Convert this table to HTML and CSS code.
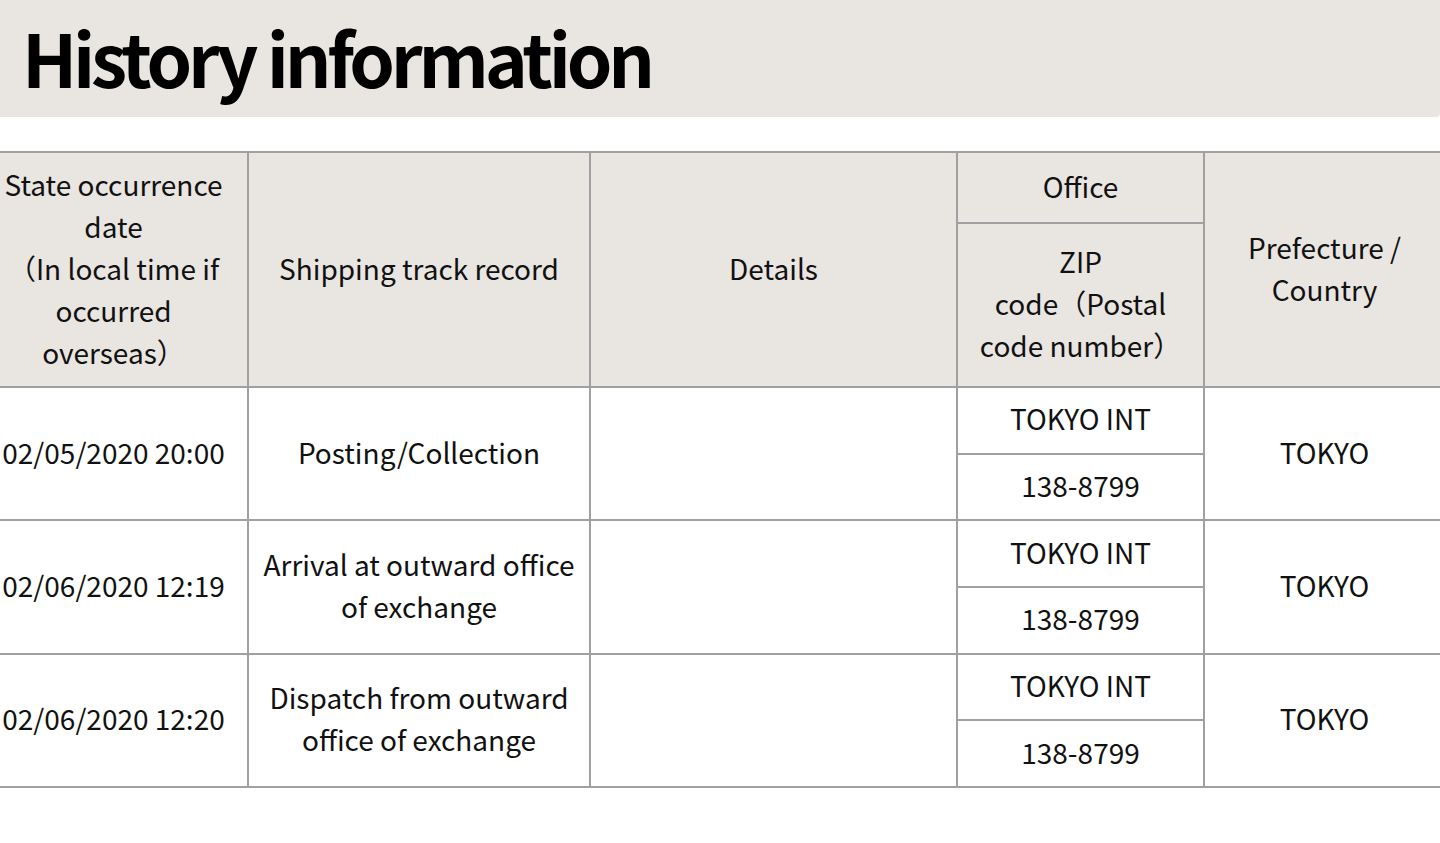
FILE: index.html
```html
<!DOCTYPE html>
<html lang="en">
<head>
<meta charset="utf-8">
<title>History information</title>
<link rel="stylesheet" href="styles.css">
</head>
<body>
<div class="page">
  <div class="title-bar">
    <h1 class="title">History information</h1>
  </div>
  <table class="history">
    <colgroup>
      <col class="c-date">
      <col class="c-track">
      <col class="c-details">
      <col class="c-office">
      <col class="c-pref">
    </colgroup>
    <thead>
      <tr class="h-top">
        <th rowspan="2">State occurrence date<br>（In local time if occurred overseas）</th>
        <th rowspan="2">Shipping track record</th>
        <th rowspan="2">Details</th>
        <th>Office</th>
        <th rowspan="2">Prefecture / Country</th>
      </tr>
      <tr class="h-bottom">
        <th>ZIP<br>code（Postal code number）</th>
      </tr>
    </thead>
    <tbody>
      <tr class="sub">
        <td rowspan="2">02/05/2020 20:00</td>
        <td rowspan="2">Posting/Collection</td>
        <td rowspan="2"></td>
        <td>TOKYO INT</td>
        <td rowspan="2">TOKYO</td>
      </tr>
      <tr class="sub">
        <td>138-8799</td>
      </tr>
      <tr class="sub">
        <td rowspan="2">02/06/2020 12:19</td>
        <td rowspan="2">Arrival at outward office of exchange</td>
        <td rowspan="2"></td>
        <td>TOKYO INT</td>
        <td rowspan="2">TOKYO</td>
      </tr>
      <tr class="sub">
        <td>138-8799</td>
      </tr>
      <tr class="sub">
        <td rowspan="2">02/06/2020 12:20</td>
        <td rowspan="2">Dispatch from outward office of exchange</td>
        <td rowspan="2"></td>
        <td>TOKYO INT</td>
        <td rowspan="2">TOKYO</td>
      </tr>
      <tr class="sub">
        <td>138-8799</td>
      </tr>
    </tbody>
  </table>
</div>
</body>
</html>
```
FILE: styles.css
```css
html, body {
  margin: 0;
  padding: 0;
  background: #ffffff;
}

body {
  font-family: "Noto Sans CJK JP", "Noto Sans", sans-serif;
  color: #111111;
  overflow: hidden;
}

.page {
  width: 1440px;
}

.title-bar {
  background: #e9e5e1;
  height: 117px;
  border-bottom-right-radius: 4px;
  display: flex;
  align-items: center;
  padding-left: 22px;
  box-sizing: border-box;
}

.title {
  margin: 0;
  font-size: 73px;
  font-weight: 700;
  line-height: 1;
  letter-spacing: -4.2px;
  color: #000000;
  position: relative;
  top: -2px;
}

.history {
  margin-top: 34px;
  margin-left: -22px;
  width: 1466px;
  border-collapse: collapse;
  table-layout: fixed;
  font-size: 28px;
  line-height: 42px;
}

.c-date { width: 269px; }
.c-track { width: 342px; }
.c-details { width: 367px; }
.c-office { width: 247px; }
.c-pref { width: 241px; }

.history th,
.history td {
  border: 2px solid #a0a0a0;
  text-align: center;
  vertical-align: middle;
  padding: 0 12px 4px;
  font-weight: 400;
}

.history th {
  background: #e9e5e1;
  color: #111111;
}

.h-top { height: 71px; }
.h-bottom { height: 164px; }

.history td {
  background: #ffffff;
  color: #111111;
}

.sub { height: 66.7px; }
```
